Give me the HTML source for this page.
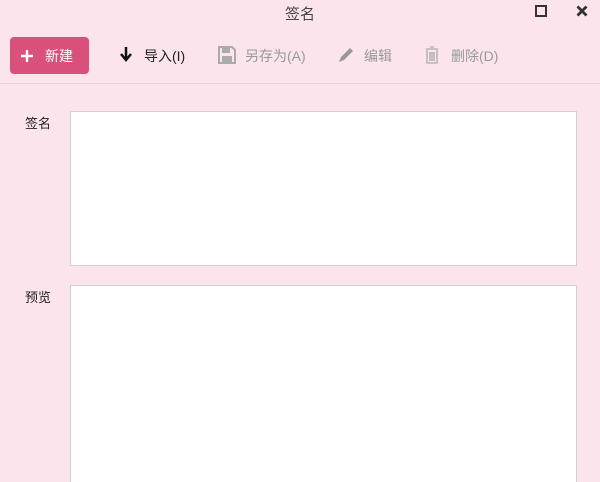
<!DOCTYPE html>
<html><head><meta charset="utf-8"><style>
*{margin:0;padding:0;box-sizing:border-box}
html,body{width:600px;height:482px;overflow:hidden}
body{background:#fbe4ec;font-family:"Liberation Sans","Noto Sans CJK SC",sans-serif;position:relative;color:#333}
.t{position:absolute;top:3px;left:0;width:600px;text-align:center;font-size:15px;color:#444}
.max{position:absolute;left:535px;top:5px;width:12px;height:12px;border:2px solid #333}
.btn{position:absolute;left:10px;top:37px;width:79px;height:37px;background:#d9507a;border-radius:4px;color:#fff;font-size:14px}
.btn span{position:absolute}
.tb{position:absolute;top:46px;font-size:14px}
.sep{position:absolute;left:0;top:83px;width:600px;height:1px;background:#f0cdd9}
.lab{position:absolute;left:25px;font-size:13px;color:#222}
.box{position:absolute;left:70px;width:507px;background:#fff;border:1px solid #d4cfd1}
</style></head><body>
<div class="t">签名</div>
<div class="max"></div>
<svg style="position:absolute;left:576px;top:5px" width="12" height="12"><path d="M1.5 1.5L10.5 10.5M10.5 1.5L1.5 10.5" stroke="#333" stroke-width="2.8"/></svg>
<div class="btn"><svg style="position:absolute;left:11px;top:13px" width="12" height="12"><path d="M6 0V12M0 6H12" stroke="#fff" stroke-width="2.4"/></svg><span style="left:35px;top:9px">新建</span></div>
<div class="tb" style="left:120px"><svg width="12" height="16" style="vertical-align:-2px"><path d="M6 1V13M1 8L6 14L11 8" stroke="#111" stroke-width="2.5" fill="none"/></svg></div>
<div class="tb" style="left:144px;color:#222">导入(I)</div>
<div class="tb" style="left:218px"><svg width="18" height="18" style="vertical-align:-3px"><path d="M1 1H14L17 4V17H1Z" fill="none" stroke="#aaa" stroke-width="2"/><rect x="4" y="2" width="8" height="5" fill="#aaa"/><rect x="4" y="10" width="10" height="6" fill="#aaa"/></svg></div>
<div class="tb" style="left:245px;color:#999">另存为(A)</div>
<div class="tb" style="left:337px"><svg width="18" height="18"><path d="M2 16L4 11L13 2L16 5L7 14Z" fill="#999"/></svg></div>
<div class="tb" style="left:364px;color:#999">编辑</div>
<div class="tb" style="left:425px"><svg width="14" height="18"><path d="M1 3H13M5 1H9M2 4V17H12V4M5 6V15M7 6V15M9 6V15" stroke="#aaa" stroke-width="1.3" fill="none"/></svg></div>
<div class="tb" style="left:451px;color:#999">删除(D)</div>
<div class="sep"></div>
<div class="lab" style="top:113px">签名</div>
<div class="box" style="top:111px;height:155px"></div>
<div class="lab" style="top:287px">预览</div>
<div class="box" style="top:285px;height:210px"></div>
</body></html>
